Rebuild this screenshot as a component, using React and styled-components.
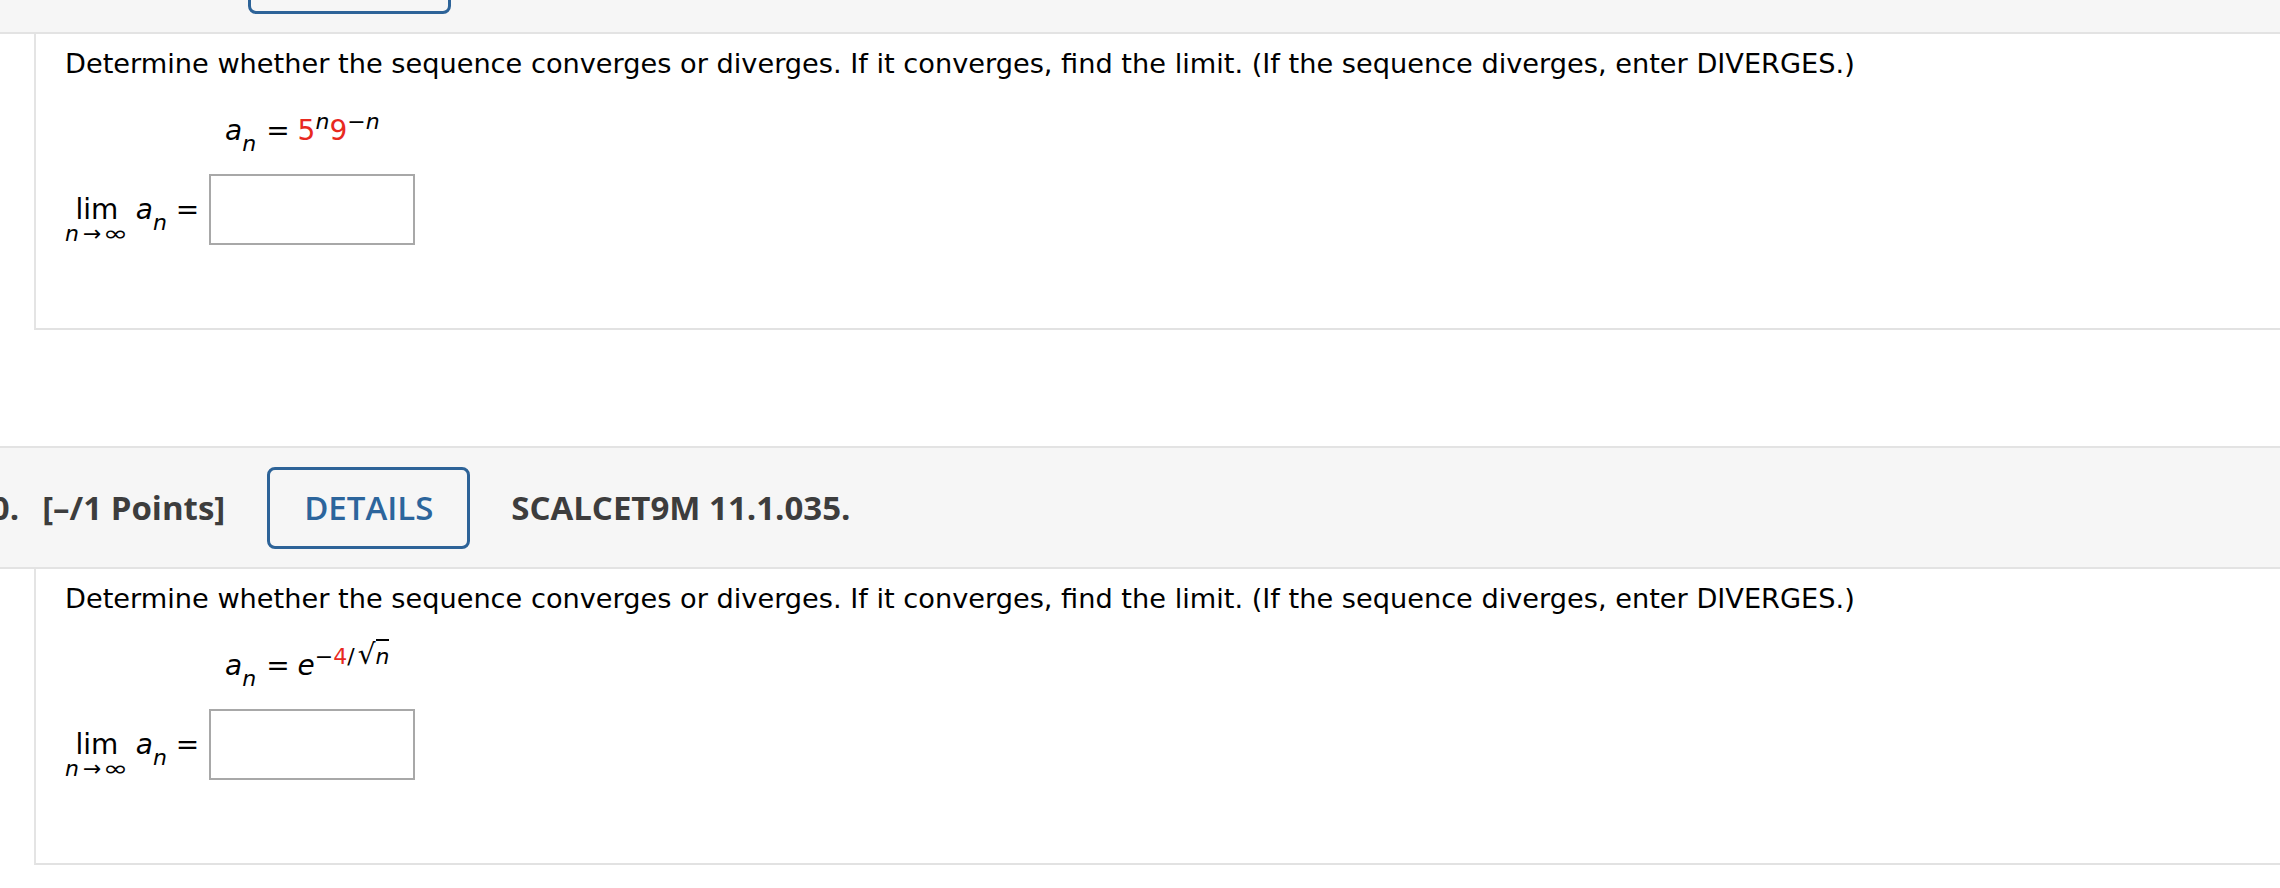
import styled, { createGlobalStyle } from "styled-components";

const GlobalStyle = createGlobalStyle`
  html, body {
    margin: 0;
    padding: 0;
    background: #fff;
    overflow: hidden;
  }
`;

const Page = styled.div`
  margin: -89px 0 0 -28px;
`;

const Block = styled.section`
  margin-bottom: 116px;
`;

const Header = styled.div`
  box-sizing: border-box;
  height: 123px;
  display: flex;
  align-items: center;
  background: #f6f6f6;
  border-top: 2px solid #e3e3e3;
  border-bottom: 2px solid #e3e3e3;
  font-family: "Open Sans", sans-serif;
  font-size: 33px;
  font-weight: 700;
  color: #3d3d3d;
  white-space: nowrap;
`;

const Points = styled.span`
  margin-left: 23px;
`;

const DetailsButton = styled.button`
  box-sizing: border-box;
  width: 203px;
  height: 82px;
  margin-left: 42px;
  display: flex;
  align-items: center;
  justify-content: center;
  background: transparent;
  border: 3px solid #2d6398;
  border-radius: 8px;
  font-family: "Open Sans", sans-serif;
  font-size: 33px;
  font-weight: 600;
  color: #2c659c;
  padding: 0;
`;

const Code = styled.span`
  margin-left: 41px;
`;

const Panel = styled.div`
  box-sizing: border-box;
  height: 296px;
  margin-left: 62px;
  padding: 15px 0 0 29px;
  border-left: 2px solid #e4e4e4;
  border-bottom: 2px solid #e2e2e2;
  font-family: "DejaVu Sans", Verdana, sans-serif;
  color: #000;
`;

const Question = styled.p`
  margin: 0;
  font-size: 27.2px;
  line-height: 30px;
  white-space: nowrap;
`;

const Equation = styled.div`
  margin-top: 32px;
  padding-left: 160px;
  font-size: 28px;
  line-height: 40px;
  white-space: nowrap;
`;

const Var = styled.span`
  font-style: italic;
`;

const Sub = styled.span`
  font-size: 22px;
  line-height: 0;
  vertical-align: -11px;
  font-style: italic;
`;

const Sup = styled.span`
  font-size: 22px;
  line-height: 0;
  vertical-align: 11px;
`;

const Red = styled.span`
  color: #e8291f;
`;

const Equals = styled.span`
  margin: 0 8px 0 10px;
`;

const Radical = styled.span`
  margin-left: 3px;
  font-size: 28px;
`;

const Radicand = styled.span`
  font-style: italic;
  border-top: 2px solid #000;
  padding-top: 3px;
`;

const LimRow = styled.div`
  margin-top: 23px;
  display: flex;
  align-items: flex-start;
`;

const MathGroup = styled.div`
  margin-top: 22px;
  display: flex;
  align-items: baseline;
  white-space: nowrap;
`;

const LimBlock = styled.div`
  display: flex;
  flex-direction: column;
  align-items: center;
`;

const LimWord = styled.span`
  font-size: 28px;
  line-height: 28px;
`;

const LimUnder = styled.span`
  font-size: 22px;
  line-height: 20px;
`;

const Arrow = styled.span`
  margin: 0 2px 0 4px;
`;

const Infinity = styled.span`
  display: inline-block;
  margin-right: 7px;
  transform: scaleX(1.38);
  transform-origin: left center;
`;

const Term = styled.span`
  margin-left: ${(p) => p.$gap || 0}px;
  font-size: 28px;
  line-height: 28px;
`;

const AnswerBox = styled.input`
  box-sizing: border-box;
  width: 206px;
  height: 71px;
  margin: 0 0 0 10px;
  padding: 0 8px;
  border: 2px solid #a8a8a8;
  background: #fff;
  outline: none;
  font-size: 26px;
`;

const QUESTION =
  "Determine whether the sequence converges or diverges. If it converges, find the limit. (If the sequence diverges, enter DIVERGES.)";

const LimitAnswer = () => (
  <LimRow>
    <MathGroup>
      <LimBlock>
        <LimWord>lim</LimWord>
        <LimUnder>
          <Var>n</Var>
          <Arrow>→</Arrow>
          <Infinity>∞</Infinity>
        </LimUnder>
      </LimBlock>
      <Term $gap={7}>
        <Var>a</Var>
        <Sub>n</Sub>
      </Term>
      <Term $gap={9}>=</Term>
    </MathGroup>
    <AnswerBox type="text" aria-label="limit" />
  </LimRow>
);

const Problem = ({ number, code, formula }) => (
  <Block>
    <Header>
      <span>{number}.</span>
      <Points>[–/1 Points]</Points>
      <DetailsButton>DETAILS</DetailsButton>
      <Code>{code}</Code>
    </Header>
    <Panel>
      <Question>{QUESTION}</Question>
      <Equation>{formula}</Equation>
      <LimitAnswer />
    </Panel>
  </Block>
);

export default function App() {
  return (
    <>
      <GlobalStyle />
      <Page>
        <Problem
          number={9}
          code="SCALCET9M 11.1.033."
          formula={
            <>
              <Var>a</Var>
              <Sub>n</Sub>
              <Equals>=</Equals>
              <Red>5</Red>
              <Sup>
                <Var>n</Var>
              </Sup>
              <Red>9</Red>
              <Sup>
                −<Var>n</Var>
              </Sup>
            </>
          }
        />
        <Problem
          number={10}
          code="SCALCET9M 11.1.035."
          formula={
            <>
              <Var>a</Var>
              <Sub>n</Sub>
              <Equals>=</Equals>
              <Var>e</Var>
              <Sup>
                −<Red>4</Red>/<Radical>√</Radical>
                <Radicand>n</Radicand>
              </Sup>
            </>
          }
        />
      </Page>
    </>
  );
}
